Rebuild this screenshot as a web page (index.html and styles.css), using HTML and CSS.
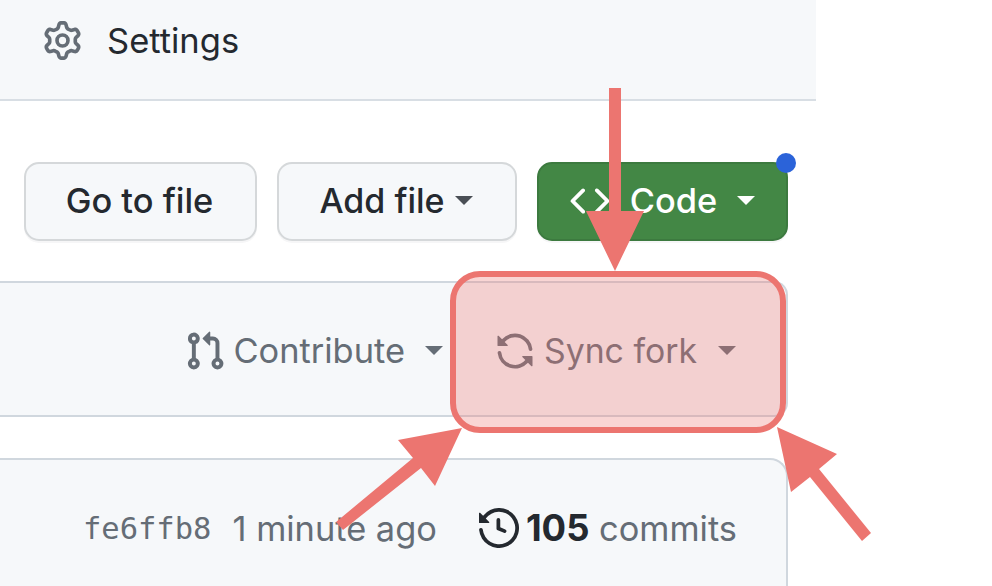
FILE: index.html
```html
<!DOCTYPE html>
<html lang="en">
<head>
<meta charset="utf-8">
<title>Sync fork</title>
<link rel="stylesheet" href="styles.css">
</head>
<body>
<div class="page">
  <header class="header">
    <svg class="icon icon-gear" viewBox="0 0 16 16"><path d="M8 0a8.2 8.2 0 0 1 .701.031C9.444.095 9.99.645 10.16 1.29l.288 1.107c.018.066.079.158.212.224.231.114.454.243.668.386.123.082.233.09.299.071l1.103-.303c.644-.176 1.392.021 1.82.63.27.385.506.792.704 1.218.315.675.111 1.422-.364 1.891l-.814.806c-.049.048-.098.147-.088.294.016.257.016.515 0 .772-.01.147.038.246.088.294l.814.806c.475.469.679 1.216.364 1.891a7.977 7.977 0 0 1-.704 1.217c-.428.61-1.176.807-1.82.63l-1.102-.302c-.067-.019-.177-.011-.3.071a5.909 5.909 0 0 1-.668.386c-.133.066-.194.158-.211.224l-.29 1.106c-.168.646-.715 1.196-1.458 1.26a8.006 8.006 0 0 1-1.402 0c-.743-.064-1.289-.614-1.458-1.26l-.289-1.106c-.018-.066-.079-.158-.212-.224a5.738 5.738 0 0 1-.668-.386c-.123-.082-.233-.09-.299-.071l-1.103.303c-.644.176-1.392-.021-1.82-.63a8.12 8.12 0 0 1-.704-1.218c-.315-.675-.111-1.422.363-1.891l.815-.806c.05-.048.098-.147.088-.294a6.214 6.214 0 0 1 0-.772c.01-.147-.038-.246-.088-.294l-.815-.806C.635 6.045.431 5.298.746 4.623a7.92 7.92 0 0 1 .704-1.217c.428-.61 1.176-.807 1.82-.63l1.102.302c.067.019.177.011.3-.071.214-.143.437-.272.668-.386.133-.066.194-.158.211-.224l.29-1.106C6.009.645 6.556.095 7.299.03 7.53.01 7.764 0 8 0Zm-.571 1.525c-.036.003-.108.036-.137.146l-.289 1.105c-.147.561-.549.967-.998 1.189-.173.086-.34.183-.5.29-.417.278-.97.423-1.529.27l-1.103-.303c-.109-.03-.175.016-.195.045-.22.312-.412.644-.573.99-.014.031-.021.11.059.19l.815.806c.411.406.562.957.53 1.456a4.709 4.709 0 0 0 0 .582c.032.499-.119 1.05-.53 1.456l-.815.806c-.081.08-.073.159-.059.19.162.346.353.677.573.989.02.03.085.076.195.046l1.102-.303c.56-.153 1.113-.008 1.53.27.161.107.328.204.501.29.447.222.85.629.997 1.189l.289 1.105c.029.109.101.143.137.146a6.6 6.6 0 0 0 1.142 0c.036-.003.108-.036.137-.146l.289-1.105c.147-.561.549-.967.998-1.189.173-.086.34-.183.5-.29.417-.278.97-.423 1.529-.27l1.103.303c.109.029.175-.016.195-.045.22-.313.411-.644.573-.99.014-.031.021-.11-.059-.19l-.815-.806c-.411-.406-.562-.957-.53-1.456a4.709 4.709 0 0 0 0-.582c-.032-.499.119-1.05.53-1.456l.815-.806c.081-.08.073-.159.059-.19a6.464 6.464 0 0 0-.573-.989c-.02-.03-.085-.076-.195-.046l-1.102.303c-.56.153-1.113.008-1.53-.27a4.44 4.44 0 0 0-.501-.29c-.447-.222-.85-.629-.997-1.189l-.289-1.105c-.029-.11-.101-.143-.137-.146a6.6 6.6 0 0 0-1.142 0ZM11 8a3 3 0 1 1-6 0 3 3 0 0 1 6 0ZM9.5 8a1.5 1.5 0 1 0-3.001.001A1.5 1.5 0 0 0 9.5 8Z"/></svg>
    <span class="header-label">Settings</span>
  </header>

  <div class="actions">
    <div class="btn btn-goto">Go to file</div>
    <div class="btn btn-add">Add file<i class="caret caret-add"></i></div>
    <div class="btn btn-code">
      <svg class="icon icon-code" viewBox="0 0 16 16"><path d="m11.28 3.22 4.25 4.25a.75.75 0 0 1 0 1.06l-4.25 4.25a.749.749 0 0 1-1.275-.326.749.749 0 0 1 .215-.734L13.94 8l-3.72-3.72a.749.749 0 0 1 .326-1.275.749.749 0 0 1 .734.215Zm-6.56 0a.751.751 0 0 1 1.042.018.751.751 0 0 1 .018 1.042L2.06 8l3.72 3.72a.749.749 0 0 1-.326 1.275.749.749 0 0 1-.734-.215L.47 8.53a.75.75 0 0 1 0-1.06Z"/></svg>
      <span class="code-label">Code</span>
      <i class="caret caret-code"></i>
      <i class="dot"></i>
    </div>
  </div>

  <div class="fork-bar">
    <div class="fork-item fork-contribute">
      <svg class="icon icon-pr" viewBox="0 0 16 16"><path d="M1.5 3.25a2.25 2.25 0 1 1 3 2.122v5.256a2.251 2.251 0 1 1-1.5 0V5.372A2.25 2.25 0 0 1 1.5 3.25Zm5.677-.177L9.573.677A.25.25 0 0 1 10 .854V2.5h1A2.5 2.5 0 0 1 13.5 5v5.628a2.251 2.251 0 1 1-1.5 0V5a1 1 0 0 0-1-1h-1v1.646a.25.25 0 0 1-.427.177L7.177 3.427a.25.25 0 0 1 0-.354ZM3.75 2.5a.75.75 0 1 0 0 1.5.75.75 0 0 0 0-1.5Zm0 9.5a.75.75 0 1 0 0 1.5.75.75 0 0 0 0-1.5Zm8.25.75a.75.75 0 1 0 1.5 0 .75.75 0 0 0-1.5 0Z"/></svg>
      <span>Contribute</span>
      <i class="caret caret-fork"></i>
    </div>
    <div class="fork-item fork-sync">
      <svg class="icon icon-sync" viewBox="0 0 16 16"><path d="M1.705 8.005a.75.75 0 0 1 .834.656 5.5 5.5 0 0 0 9.592 2.97l-1.204-1.204a.25.25 0 0 1 .177-.427h3.646a.25.25 0 0 1 .25.25v3.646a.25.25 0 0 1-.427.177l-1.38-1.38A7.002 7.002 0 0 1 1.05 8.84a.75.75 0 0 1 .656-.834ZM8 2.5a5.487 5.487 0 0 0-4.131 1.869l1.204 1.204A.25.25 0 0 1 4.896 6H1.25A.25.25 0 0 1 1 5.75V2.104a.25.25 0 0 1 .427-.177l1.38 1.38A7.002 7.002 0 0 1 14.95 7.16a.75.75 0 0 1-1.49.178A5.5 5.5 0 0 0 8 2.5Z"/></svg>
      <span>Sync fork</span>
      <i class="caret caret-sync"></i>
    </div>
  </div>

  <div class="commit-box">
    <span class="hash">fe6ffb8</span>
    <span class="age">1 minute ago</span>
    <svg class="icon icon-history" viewBox="0 0 16 16"><path d="m.427 1.927 1.215 1.215a8.002 8.002 0 1 1-1.6 5.685.75.75 0 1 1 1.493-.154 6.5 6.5 0 1 0 1.18-4.458l1.358 1.358A.25.25 0 0 1 3.896 6H.25A.25.25 0 0 1 0 5.75V2.104a.25.25 0 0 1 .427-.177ZM7.75 4a.75.75 0 0 1 .75.75v2.992l2.028.812a.75.75 0 0 1-.557 1.392l-2.5-1A.751.751 0 0 1 7 8.25v-3.5A.75.75 0 0 1 7.75 4Z"/></svg>
    <span class="commits"><b>105</b> commits</span>
  </div>
</div>

<div class="highlight"></div>
<svg class="arrows" viewBox="0 0 992 586">
  <polygon points="609,88 621,88 621,211 644,211 615,271 586,211 609,211"/>
  <polygon points="462,428 435,486 421,468 343,530 336,522 413,458 398,440"/>
  <polygon points="777,427 837,454 819,469 871,533 862,541 810,477 791,492"/>
</svg>
</body>
</html>
```

FILE: styles.css
```css
html, body {
  margin: 0;
  height: 586px;
  overflow: hidden;
  background: #fff;
}

body {
  position: relative;
  font-family: Inter, "Liberation Sans", sans-serif;
  color: #24292f;
}

.page {
  width: 816px;
}

.icon {
  display: block;
  flex: none;
  fill: currentColor;
}

.header {
  box-sizing: border-box;
  height: 101px;
  display: flex;
  align-items: center;
  padding: 0 0 18px 43px;
  background: #f6f8fa;
  border-bottom: 2px solid #d8dee4;
  font-size: 34.5px;
}

.icon-gear {
  width: 39px;
  height: 39px;
  color: #656d76;
}

.header-label {
  margin-left: 25px;
}

.actions {
  display: flex;
  justify-content: flex-end;
  gap: 20px;
  padding: 61px 28px 40px 0;
}

.btn {
  position: relative;
  box-sizing: border-box;
  height: 79px;
  display: flex;
  align-items: center;
  justify-content: center;
  border: 2px solid #d5d8da;
  border-radius: 15px;
  background: #f6f8fa;
  box-shadow: 0 2px 0 rgba(31, 35, 40, .04);
  font-size: 34.4px;
  font-weight: 500;
}

.btn-goto {
  width: 233px;
  padding: 0 2px 2px 0;
}

.btn-add {
  width: 240px;
  padding: 0 2px 2px 0;
  font-size: 34px;
}

.btn-code {
  width: 251px;
  padding-bottom: 2px;
  background: #438745;
  border-color: #3c7a3f;
  color: #fff;
}

.caret {
  display: block;
  flex: none;
  width: 0;
  height: 0;
  border-style: solid;
  border-width: 9px 9.5px 0;
  border-color: currentColor transparent transparent;
}

.caret-add {
  margin-left: 10px;
  color: #4a4f55;
}

.icon-code {
  width: 40px;
  height: 40px;
}

.code-label {
  margin-left: 20px;
}

.caret-code {
  margin-left: 20px;
}

.dot {
  position: absolute;
  top: -11px;
  right: -10px;
  width: 20px;
  height: 20px;
  border-radius: 50%;
  background: #2b63d9;
}

.fork-bar {
  box-sizing: border-box;
  width: 788px;
  height: 136px;
  display: flex;
  justify-content: flex-end;
  align-items: center;
  padding: 3px 50px 0 0;
  gap: 52px;
  background: #f6f8fa;
  border: 2px solid #d0d7de;
  border-left: 0;
  border-radius: 0 14px 14px 0;
  font-size: 34.4px;
  color: #656d76;
}

.fork-item {
  display: flex;
  align-items: center;
}

.fork-sync {
  font-size: 33.8px;
}

.icon-pr {
  width: 42px;
  height: 42px;
  margin-right: 7px;
}

.icon-sync {
  width: 40px;
  height: 40px;
  margin-right: 9px;
}

.caret-fork {
  margin-left: 20px;
}

.caret-sync {
  margin-left: 21px;
}

.commit-box {
  box-sizing: border-box;
  width: 788px;
  height: 140px;
  margin-top: 41px;
  display: flex;
  align-items: center;
  justify-content: flex-end;
  padding: 0 49px 2px 0;
  background: #f6f8fa;
  border: 2px solid #d0d7de;
  border-width: 2px 2px 0 0;
  border-top-right-radius: 18px;
  font-size: 34.4px;
  color: #656d76;
}

.hash {
  font-family: "DejaVu Sans Mono", "Liberation Mono", monospace;
  font-size: 30.5px;
}

.age {
  margin-left: 21px;
}

.icon-history {
  width: 40px;
  height: 40px;
  margin-left: 42px;
  color: #24292f;
}

.commits {
  margin-left: 7px;
}

.commits b {
  font-size: 36.4px;
  font-weight: 700;
  color: #24292f;
}

.highlight {
  position: absolute;
  left: 450px;
  top: 271px;
  box-sizing: border-box;
  width: 336px;
  height: 162px;
  border: 6px solid #ec7570;
  border-radius: 30px;
  background: rgba(236, 117, 112, .3);
}

.arrows {
  position: absolute;
  left: 0;
  top: 0;
  width: 992px;
  height: 586px;
  fill: #ec7570;
}
```
